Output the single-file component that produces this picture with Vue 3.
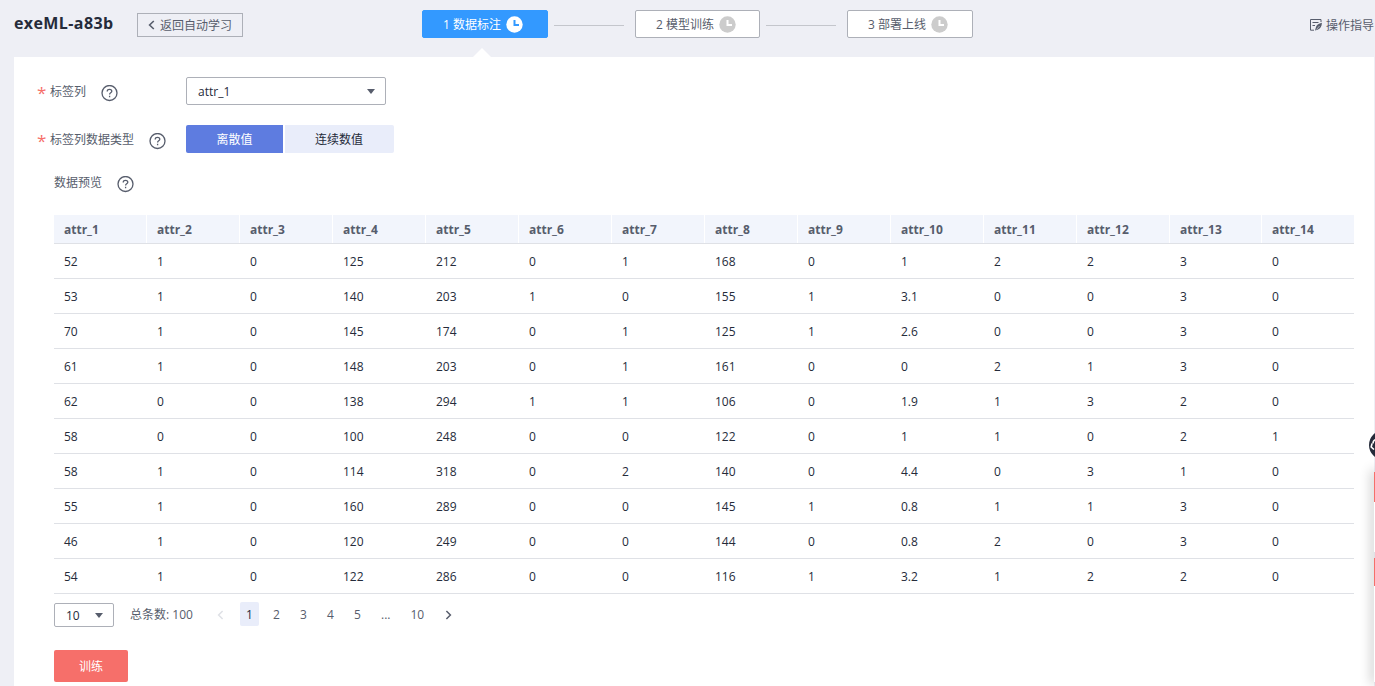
<script setup>
import { ref } from "vue";

const steps = [
  { id: 1, label: "数据标注" },
  { id: 2, label: "模型训练" },
  { id: 3, label: "部署上线" },
];
const currentStep = ref(1);

const dataType = ref("discrete");
const page = ref(1);
const pages = [1, 2, 3, 4, 5, "...", 10];

const columns = Array.from({ length: 14 }, (_, i) => `attr_${i + 1}`);
const rows = [
  [52, 1, 0, 125, 212, 0, 1, 168, 0, 1, 2, 2, 3, 0],
  [53, 1, 0, 140, 203, 1, 0, 155, 1, 3.1, 0, 0, 3, 0],
  [70, 1, 0, 145, 174, 0, 1, 125, 1, 2.6, 0, 0, 3, 0],
  [61, 1, 0, 148, 203, 0, 1, 161, 0, 0, 2, 1, 3, 0],
  [62, 0, 0, 138, 294, 1, 1, 106, 0, 1.9, 1, 3, 2, 0],
  [58, 0, 0, 100, 248, 0, 0, 122, 0, 1, 1, 0, 2, 1],
  [58, 1, 0, 114, 318, 0, 2, 140, 0, 4.4, 0, 3, 1, 0],
  [55, 1, 0, 160, 289, 0, 0, 145, 1, 0.8, 1, 1, 3, 0],
  [46, 1, 0, 120, 249, 0, 0, 144, 0, 0.8, 2, 0, 3, 0],
  [54, 1, 0, 122, 286, 0, 0, 116, 1, 3.2, 1, 2, 2, 0],
];

function goTo(p) {
  if (typeof p === "number") {
    page.value = p;
  }
}
</script>

<template>
  <div class="page">
    <header class="header">
      <h1 class="title">exeML-a83b</h1>
      <button class="back-btn">
        <svg width="7" height="10" viewBox="0 0 7 10">
          <path d="M5.8 1 1.6 5l4.2 4" />
        </svg>
        <span>返回自动学习</span>
      </button>

      <div class="steps">
        <template v-for="step in steps" :key="step.id">
          <span v-if="step.id > 1" class="step-line"></span>
          <div class="step" :class="{ active: step.id === currentStep }">
            <span>{{ step.id }} {{ step.label }}</span>
            <svg class="clock" width="17" height="17" viewBox="0 0 17 17">
              <circle cx="8.5" cy="8.5" r="8.2" />
              <path d="M8.5 4v5h4.5" />
            </svg>
          </div>
        </template>
      </div>

      <a class="guide">
        <svg width="12" height="12" viewBox="0 0 12 12">
          <path d="M11 3V.5H.5v10.700h3.500M2.500 3.500h6M2.500 6.500h2.500" />
          <path class="pen" d="M11.900 3.700c-3.200.5-5.700 2.600-6.200 5.200l-.7 2.600 2.600-.8c2.700-.7 4.300-3.500 4.300-7z" />
          <path class="nib" d="M6.500 10.500 9.500 7" />
        </svg>
        <span>操作指导</span>
      </a>
    </header>

    <main class="panel">
      <div class="form-row">
        <label class="label required">标签列</label>
        <svg class="help" width="17" height="17" viewBox="0 0 17 17">
          <circle cx="8.5" cy="8" r="7.5" />
          <path d="M6.200 6.400c0-1.300 1-2.100 2.300-2.100s2.300.8 2.300 2c0 1.500-2.200 1.600-2.200 3.200M8.600 10.700v1.500" />
        </svg>
        <div class="select select-label">
          <span>attr_1</span>
          <i class="caret"></i>
        </div>
      </div>

      <div class="form-row type-row">
        <label class="label required">标签列数据类型</label>
        <svg class="help" width="17" height="17" viewBox="0 0 17 17">
          <circle cx="8.5" cy="8" r="7.5" />
          <path d="M6.200 6.400c0-1.300 1-2.100 2.300-2.100s2.300.8 2.300 2c0 1.500-2.200 1.600-2.200 3.200M8.600 10.700v1.500" />
        </svg>
        <div class="toggle">
          <button
            class="discrete"
            :class="{ selected: dataType === 'discrete' }"
            @click="dataType = 'discrete'"
          >
            离散值
          </button>
          <button
            class="continuous"
            :class="{ selected: dataType === 'continuous' }"
            @click="dataType = 'continuous'"
          >
            连续数值
          </button>
        </div>
      </div>

      <div class="form-row preview-row">
        <label class="label">数据预览</label>
        <svg class="help" width="17" height="17" viewBox="0 0 17 17">
          <circle cx="8.5" cy="8" r="7.5" />
          <path d="M6.200 6.400c0-1.300 1-2.100 2.300-2.100s2.300.8 2.300 2c0 1.500-2.200 1.600-2.200 3.200M8.600 10.700v1.500" />
        </svg>
      </div>

      <table class="table">
        <thead>
          <tr>
            <th v-for="col in columns" :key="col">{{ col }}</th>
          </tr>
        </thead>
        <tbody>
          <tr v-for="(row, i) in rows" :key="i">
            <td v-for="(cell, j) in row" :key="j">{{ cell }}</td>
          </tr>
        </tbody>
      </table>

      <div class="pager">
        <div class="select select-size">
          <span>10</span>
          <i class="caret"></i>
        </div>
        <span class="total">总条数: 100</span>
        <svg class="arrow prev" width="7" height="10" viewBox="0 0 7 10">
          <path d="M5.6 1 1.6 5l4 4" />
        </svg>
        <div class="pages">
          <span
            v-for="p in pages"
            :key="p"
            class="page-no"
            :class="{ current: p === page }"
            @click="goTo(p)"
            >{{ p }}</span
          >
        </div>
        <svg class="arrow" width="7" height="10" viewBox="0 0 7 10">
          <path d="M1.4 1l4 4-4 4" />
        </svg>
      </div>

      <button class="train-btn">训练</button>
    </main>

    <!-- support widget docked to the right edge -->
    <aside class="dock">
      <svg class="dock-avatar" width="6" height="30" viewBox="0 0 6 30">
        <circle cx="15" cy="15" r="15" />
        <path d="M7 9.500c-2 .5-3 2-3 4M3 13.500l-.8 3.500 2.800 2.500" />
      </svg>
      <div class="dock-card">
        <i class="dock-red first"></i>
        <i class="dock-gap"></i>
        <i class="dock-red second"></i>
      </div>
    </aside>
  </div>
</template>

<style>
body {
  background: #eeeff5;
  overflow: hidden;
}
</style>

<style scoped>
.page {
  position: relative;
  height: 686px;
  overflow: hidden;
  box-sizing: border-box;
  padding: 0 1px 0 14px;
  background: #eeeff5;
  color: #575d6c;
  font-family: "Open Sans", "Noto Sans CJK SC", sans-serif;
  font-size: 12px;
  line-height: 18px;
}

.page * {
  box-sizing: border-box;
}

button {
  font: inherit;
  padding: 2px 0 0;
  cursor: pointer;
}

svg {
  flex: none;
  fill: none;
  stroke: #575d6c;
}

.header {
  display: flex;
  align-items: flex-start;
  height: 57px;
}

.title {
  width: 123px;
  margin: 11px 0 0;
  color: #252b3a;
  font-size: 16px;
  font-weight: 700;
  letter-spacing: 0.4px;
  line-height: 24px;
  white-space: nowrap;
}

.back-btn {
  display: flex;
  align-items: center;
  gap: 5px;
  width: 106px;
  height: 24px;
  margin-top: 13px;
  padding: 0 0 0 10px;
  border: 1px solid #adb0b8;
  background: transparent;
  color: #575d6c;
  white-space: nowrap;
}

.back-btn svg {
  stroke-width: 1.6;
}

.back-btn span,
.step span,
.select span,
.total,
.label {
  padding-top: 2px;
}

.steps {
  display: flex;
  align-items: center;
  margin: 10px 0 0 179px;
}

.step {
  position: relative;
  display: flex;
  align-items: center;
  gap: 5px;
  width: 126px;
  height: 28px;
  padding-left: 20px;
  border: 1px solid #adb0b8;
  border-radius: 2px;
  background: #fff;
  white-space: nowrap;
}

.step.active {
  border-color: #3399ff;
  background: #3399ff;
  color: #fff;
}

.step.active::after {
  content: "";
  position: absolute;
  left: 59px;
  top: 37px;
  margin-left: -9px;
  border: 9px solid transparent;
  border-top: 0;
  border-bottom-color: #fff;
}

.clock circle {
  fill: #ccc;
  stroke: none;
}

.clock path {
  stroke: #fff;
  stroke-width: 2;
}

.active .clock circle {
  fill: #fff;
}

.active .clock path {
  stroke: #3399ff;
}

.step-line {
  width: 70px;
  height: 1px;
  margin: 2px 11px 0 6px;
  background: #c4c6cc;
}

.step:nth-of-type(2) {
  width: 125px;
}

.guide {
  display: flex;
  align-items: center;
  gap: 4px;
  margin: 17px 0 0 auto;
  white-space: nowrap;
}

.guide svg {
  margin-bottom: 3px;
}

.guide .pen {
  fill: #575d6c;
  stroke: none;
}

.guide .nib {
  stroke: #eeeff5;
  stroke-width: 0.6;
}

.panel {
  height: 629px;
  padding: 20px 20px 0 40px;
  background: #fff;
}

.form-row {
  display: flex;
  align-items: center;
  height: 28px;
}

.label {
  white-space: nowrap;
}

.required {
  margin-left: -17px;
}

.required::before {
  content: "*";
  display: inline-block;
  width: 13px;
  color: #f66f6a;
  font-size: 17px;
  line-height: 12px;
  vertical-align: -3px;
}

.help {
  margin: 5px 0 0 15px;
  stroke-width: 1.3;
}

.select {
  display: flex;
  align-items: center;
  justify-content: space-between;
  padding: 0 10px 0 11px;
  border: 1px solid #adb0b8;
  border-radius: 2px;
  background: #fff;
  color: #252b3a;
}

.select-label {
  width: 200px;
  height: 28px;
  margin-left: 68px;
}

.caret {
  border: 4.5px solid transparent;
  border-top: 5px solid #575d6c;
  border-bottom: 0;
}

.type-row {
  margin-top: 20px;
}

.toggle {
  display: flex;
  gap: 2px;
  margin-left: 20px;
}

.toggle button {
  height: 28px;
  border: 0;
  background: #e9edfa;
  color: #252b3a;
}

.toggle .discrete {
  width: 97px;
  border-radius: 2px 0 0 2px;
}

.toggle .continuous {
  width: 109px;
  padding-right: 1px;
  border-radius: 0 2px 2px 0;
}

.toggle .selected {
  background: #5e7ce0;
  color: #fff;
}

.preview-row {
  margin-top: 15px;
}

.table {
  width: 1300px;
  margin-top: 19px;
  border-collapse: separate;
  border-spacing: 0;
  table-layout: fixed;
}

.table th,
.table td {
  padding: 2px 0 0 10px;
  border-bottom: 1px solid #dfe1e6;
  text-align: left;
}

.table th {
  position: relative;
  width: 93px;
  height: 29px;
  background: #f2f5fc;
  font-weight: 700;
}

.table th:nth-child(n + 13) {
  width: 92px;
}

.table th:not(:last-child)::after {
  content: "";
  position: absolute;
  top: 0;
  right: 0;
  width: 1px;
  height: 28px;
  background: #fff;
}

.table td {
  height: 35px;
  color: #252b3a;
}

.pager {
  display: flex;
  align-items: center;
  height: 24px;
  margin-top: 8px;
}

.select-size {
  width: 60px;
  height: 24px;
  margin-top: 2px;
}

.total {
  width: 87px;
  margin-left: 16px;
  white-space: nowrap;
}

.arrow {
  margin-top: 1px;
  stroke-width: 1.5;
}

.arrow.prev {
  stroke: #dfe1e6;
}

.pages {
  display: flex;
  gap: 8px;
  margin: 0 15px 0 16px;
}

.page-no {
  min-width: 19px;
  height: 24px;
  padding: 0 6px;
  border-radius: 2px;
  line-height: 26px;
  text-align: center;
  cursor: pointer;
}

.page-no.current {
  background: #e9edfa;
  color: #252b3a;
}

.train-btn {
  display: block;
  width: 74px;
  height: 32px;
  margin-top: 24px;
  border: 0;
  border-radius: 2px;
  background: #f66f6a;
  color: #fff;
}

.dock {
  position: absolute;
  right: 0;
  top: 430px;
  width: 6px;
}

.dock-avatar {
  display: block;
}

.dock-avatar circle {
  fill: #252b3a;
  stroke: none;
}

.dock-avatar path {
  stroke: #fff;
  stroke-width: 1.6;
}

.dock-card {
  display: flex;
  flex-direction: column;
  width: 1px;
  height: 210px;
  margin: 12px 0 0 5px;
  background: #fff;
  box-shadow: 0 0 12px 2px rgba(0, 0, 0, 0.3);
}

.dock-red {
  height: 30px;
  background: #f66f6a;
}

.dock-gap {
  height: 6px;
  margin-top: 50px;
  background: #dfe1e6;
}

.dock-red.second {
  height: 28px;
}
</style>
